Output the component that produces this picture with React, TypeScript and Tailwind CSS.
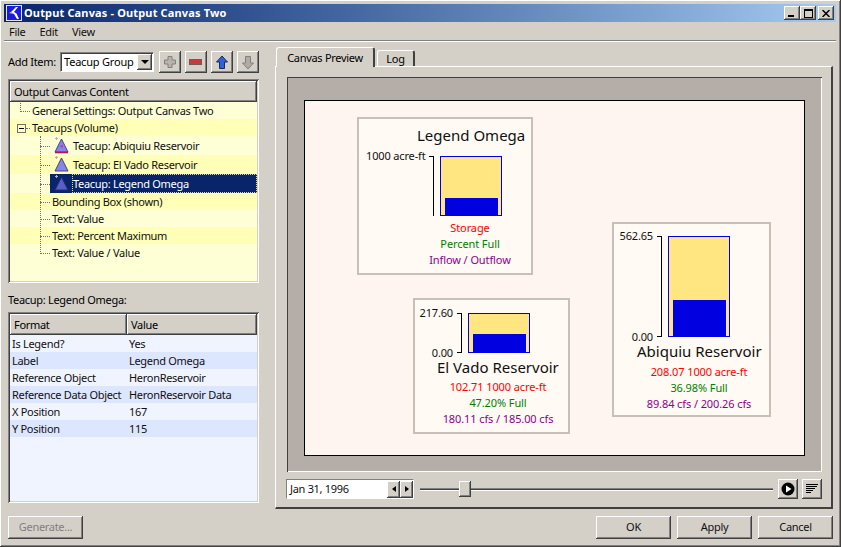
import type { ReactNode } from "react";

const raised = "shadow-[inset_-1px_-1px_0_#404040,inset_1px_1px_0_#ffffff,inset_-2px_-2px_0_#808080]";
const sunken = "shadow-[inset_1px_1px_0_#808080,inset_-1px_-1px_0_#ffffff,inset_2px_2px_0_#404040,inset_-2px_-2px_0_#d4d0c8]";

const Logo = () => (
  <svg width="16" height="16" viewBox="0 0 16 16" className="shrink-0">
    <rect x="0.5" y="0.5" width="15" height="15" fill="#1a1ae0" stroke="#dfe6ff" />
    <path d="M10 2 L5 7 L8 9 L11 14 L13 14 L10.5 8.5 L8 7 L12 2 Z" fill="#ffffff" />
    <path d="M5 7 L3 8 L8 9 Z" fill="#c9d4ff" />
  </svg>
);

const WinButton = ({ children }: { children: ReactNode }) => (
  <div className={`w-[16px] h-[14px] bg-[#d4d0c8] flex items-center justify-center ${raised}`}>{children}</div>
);

const IconButton = ({ children }: { children: ReactNode }) => (
  <button className={`w-[22px] h-[22px] bg-[#d4d0c8] flex items-center justify-center ${raised}`}>{children}</button>
);

const PlusIcon = () => (
  <svg width="14" height="14" viewBox="0 0 14 14">
    <path d="M5 1.5h4v3.5h3.5v4H9v3.5H5V9H1.5V5H5z" fill="#b8b4ac" stroke="#808080" />
  </svg>
);
const MinusIcon = () => (
  <svg width="14" height="14" viewBox="0 0 14 14">
    <rect x="0.5" y="4.5" width="12" height="5" fill="#c8383c" stroke="#6e5a5a" />
  </svg>
);
const UpIcon = () => (
  <svg width="14" height="15" viewBox="0 0 14 15">
    <path d="M7 1 L12.5 7 H9.5 V13.5 H4.5 V7 H1.5 Z" fill="#2f62d8" stroke="#1b2a5c" />
  </svg>
);
const DownIcon = () => (
  <svg width="14" height="15" viewBox="0 0 14 15">
    <path d="M7 14 L12.5 8 H9.5 V1.5 H4.5 V8 H1.5 Z" fill="#b0aca4" stroke="#808080" />
  </svg>
);

const TeacupIcon = ({ alert, selected }: { alert?: boolean; selected?: boolean }) => (
  <svg width="15" height="17" viewBox="0 0 15 17" className="shrink-0">
    <path d="M1 1.5h3M2.5 0v3" stroke="#b0b0c8" strokeWidth="1" />
    <path d="M7.5 2 L14 15 H1 Z" fill={selected ? "#5a5fc8" : "#8585f0"} stroke={selected ? "#1a2a70" : "#46466e"} />
    {alert && <path d="M1 15.5 H14" stroke="#c01050" strokeWidth="1.6" />}
    {alert && <rect x="6.5" y="8" width="2.5" height="2.5" fill="#e030a0" />}
  </svg>
);

const treeRows = [
  { label: "General Settings: Output Canvas Two", pad: 22, h: 17, bg: "bg-[#ffffd6]" },
  { label: "Teacups (Volume)", pad: 22, h: 17, bg: "bg-[#ffffb8]" },
  { label: "Teacup: Abiquiu Reservoir", pad: 40, h: 19, bg: "bg-[#ffffd6]", icon: "alert" },
  { label: "Teacup: El Vado Reservoir", pad: 40, h: 19, bg: "bg-[#ffffb8]", icon: "plain" },
  { label: "Teacup: Legend Omega", pad: 40, h: 19, bg: "bg-[#ffffd6]", icon: "selected" },
  { label: "Bounding Box (shown)", pad: 42, h: 17, bg: "bg-[#ffffb8]" },
  { label: "Text: Value", pad: 42, h: 17, bg: "bg-[#ffffd6]" },
  { label: "Text: Percent Maximum", pad: 42, h: 17, bg: "bg-[#ffffb8]" },
  { label: "Text: Value / Value", pad: 42, h: 17, bg: "bg-[#ffffd6]" },
];

const TreeRow = ({ row }: { row: (typeof treeRows)[number] }) => {
  const isSelected = row.icon === "selected";
  return (
    <div className={`flex items-center ${row.bg}`} style={{ height: row.h, paddingLeft: row.pad }}>
      {row.icon ? (
        <div className={`h-full flex items-center ${isSelected ? "w-[22px] bg-[#0a246a]" : "w-[22px]"}`}>
          <div className="pl-[4px] flex">
            <TeacupIcon alert={row.icon === "alert"} selected={isSelected} />
          </div>
        </div>
      ) : null}
      {isSelected ? (
        <div className="flex-1 h-full flex items-center bg-[#0a246a] text-white border border-dotted border-[#d8d8a0] pt-[1px]">
          {row.label}
        </div>
      ) : (
        <span className={row.icon ? "pl-[1px] pt-[1px]" : "pt-[1px]"}>{row.label}</span>
      )}
    </div>
  );
};

const TreeLines = () => (
  <>
    <div className="absolute left-[10px] top-[1px] h-[9px] border-l border-dotted border-[#707070]" />
    <div className="absolute left-[10px] top-[9px] w-[10px] border-t border-dotted border-[#707070]" />
    <div className="absolute left-[7px] top-[22px] w-[9px] h-[9px] bg-[#ffffb8] border border-[#707070] flex items-center justify-center">
      <div className="w-[5px] h-px bg-black" />
    </div>
    <div className="absolute left-[16px] top-[26px] w-[4px] border-t border-dotted border-[#707070]" />
    <div className="absolute left-[30px] top-[34px] h-[118px] border-l border-dotted border-[#707070]" />
    {[44, 63, 82, 100, 117, 134, 151].map((y) => (
      <div key={y} className="absolute left-[30px] w-[10px] border-t border-dotted border-[#707070]" style={{ top: y }} />
    ))}
  </>
);

const propRows = [
  ["Is Legend?", "Yes"],
  ["Label", "Legend Omega"],
  ["Reference Object", "HeronReservoir"],
  ["Reference Data Object", "HeronReservoir Data"],
  ["X Position", "167"],
  ["Y Position", "115"],
];

const Gauge = ({ top, bottom, h, water, labelW }: { top: string; bottom?: string; h: number; water: number; labelW: number }) => (
  <div className="flex" style={{ height: h }}>
    <div className="flex flex-col justify-between text-right text-[#101010] leading-[12px] -my-[6px] tracking-[-0.15px]" style={{ width: labelW }}>
      <span className="whitespace-nowrap">{top}</span>
      <span>{bottom}</span>
    </div>
    <div className={`ml-[4px] w-[5px] border-t border-r border-black ${bottom ? "border-b" : ""}`} />
    <div className="ml-[6px] w-[62px] border border-[#0000e0] bg-[#ffe680] flex items-end pl-[4px] pr-[3px]">
      <div className="w-full bg-[#0000e0]" style={{ height: water }} />
    </div>
  </div>
);

const CardText = ({ red, green, purple }: { red: string; green: string; purple: string }) => (
  <div className="flex flex-col items-center leading-[16px] whitespace-nowrap tracking-[-0.1px]">
    <span className="text-[#ff0000]">{red}</span>
    <span className="text-[#008000]">{green}</span>
    <span className="text-[#8b008b]">{purple}</span>
  </div>
);

const Card = ({ x, y, w, h, className, children }: { x: number; y: number; w: number; h: number; className: string; children: ReactNode }) => (
  <div
    className={`absolute border-2 border-[#c8c0b8] bg-[#fffaf4] flex flex-col ${className}`}
    style={{ left: x - 305, top: y - 101, width: w, height: h }}
  >
    {children}
  </div>
);

const Canvas = () => (
  <div className="relative flex-1 bg-[#fff5f0] border border-black">
    <Card x={357} y={117} w={176} h={158} className="pl-[7px]">
      <div className="mt-[5px] pl-[51px] text-[15px] leading-[22px] text-[#101010] whitespace-nowrap tracking-normal">Legend Omega</div>
      <div className="mt-[10px]">
        <Gauge top="1000 acre-ft" h={60} water={17} labelW={59} />
      </div>
      <div className="mt-[4px] ml-[34px] w-[140px]">
        <CardText red="Storage" green="Percent Full" purple="Inflow / Outflow" />
      </div>
    </Card>
    <Card x={413} y={298} w={157} h={136} className="pl-[4px]">
      <div className="mt-[13px]">
        <Gauge top="217.60" bottom="0.00" h={40} water={18} labelW={34} />
      </div>
      <div className="mt-[6px] pl-[18px] text-[15px] leading-[16px] text-[#101010] whitespace-nowrap tracking-normal">El Vado Reservoir</div>
      <div className="mt-[4px] ml-[10px] w-[138px]">
        <CardText red="102.71 1000 acre-ft" green="47.20% Full" purple="180.11 cfs / 185.00 cfs" />
      </div>
    </Card>
    <Card x={612} y={222} w={159} h={195} className="pl-[3px]">
      <div className="mt-[12px]">
        <Gauge top="562.65" bottom="0.00" h={101} water={36} labelW={36} />
      </div>
      <div className="mt-[6px] pl-[20px] text-[15px] leading-[16px] text-[#101010] whitespace-nowrap tracking-normal">Abiquiu Reservoir</div>
      <div className="mt-[5px] ml-[12px] w-[140px]">
        <CardText red="208.07 1000 acre-ft" green="36.98% Full" purple="89.84 cfs / 200.26 cfs" />
      </div>
    </Card>
  </div>
);

const App = () => {
  return (
    <div
      className="w-[841px] h-[547px] overflow-hidden bg-[#d4d0c8] flex flex-col pl-[4px] pr-[5px] pt-[4px] pb-[2px] text-[11px] tracking-[-0.3px] text-black shadow-[inset_-1px_-1px_0_#404040,inset_1px_1px_0_#ffffff,inset_-2px_-2px_0_#808080]"
      style={{ fontFamily: '"Noto Sans", sans-serif' }}
    >
      {/* Title bar */}
      <div className="h-[18px] shrink-0 flex items-center bg-gradient-to-r from-[#0a246a] to-[#a6caf0] pl-[2px] pr-[2px]">
        <Logo />
        <span className="ml-[2px] text-white font-bold text-[11px] tracking-[0.15px] whitespace-nowrap">Output Canvas - Output Canvas Two</span>
        <div className="ml-auto flex">
          <WinButton><div className="w-[6px] h-[2px] bg-black mt-[6px] mr-[2px]" /></WinButton>
          <WinButton><div className="w-[9px] h-[9px] border border-black border-t-2" /></WinButton>
          <div className="ml-[2px]">
            <WinButton>
              <svg width="8" height="7" viewBox="0 0 8 7"><path d="M0.5 0 L7.5 7 M7.5 0 L0.5 7" stroke="#000" strokeWidth="1.5" /></svg>
            </WinButton>
          </div>
        </div>
      </div>

      {/* Menu */}
      <div className="h-[19px] shrink-0 flex items-center gap-[14px] pl-[5px] pt-[2px] border-b border-[#808080] text-[#101010]">
        <span>File</span>
        <span>Edit</span>
        <span>View</span>
      </div>

      <div className="flex-1 flex border-t border-white">
        {/* Left column */}
        <div className="w-[251px] ml-[4px] pt-[9px] flex flex-col shrink-0">
          <div className="flex items-center h-[22px]">
            <span className="w-[52px]">Add Item:</span>
            <div className="w-[94px] h-[20px] bg-white border border-[#808080] border-r-white border-b-white flex items-center pl-[2px] pr-[1px] shadow-[inset_1px_1px_0_#404040]">
              <span className="flex-1 pl-[1px] tracking-[-0.2px]">Teacup Group</span>
              <div className={`w-[15px] h-[16px] bg-[#d4d0c8] flex items-center justify-center ${raised}`}>
                <div className="w-0 h-0 border-l-[4px] border-r-[4px] border-t-[4px] border-l-transparent border-r-transparent border-t-black" />
              </div>
            </div>
            <div className="ml-[5px] flex gap-[4px]">
              <IconButton><PlusIcon /></IconButton>
              <IconButton><MinusIcon /></IconButton>
              <IconButton><UpIcon /></IconButton>
              <IconButton><DownIcon /></IconButton>
            </div>
          </div>

          {/* Tree */}
          <div className={`mt-[6px] h-[204px] p-[2px] pr-[2px] flex flex-col bg-[#ffffd6] ${sunken}`}>
            <div className={`h-[21px] shrink-0 flex items-center pl-[4px] pt-[1px] bg-[#d4d0c8] ${raised}`}>Output Canvas Content</div>
            <div className="relative flex-1 text-[#101010] overflow-hidden">
              {treeRows.map((r) => <TreeRow key={r.label} row={r} />)}
              <TreeLines />
            </div>
          </div>

          <div className="mt-[10px] h-[14px] leading-[14px]">Teacup: Legend Omega:</div>

          {/* Property table */}
          <div className={`mt-[5px] h-[191px] p-[2px] flex flex-col bg-[#f0f4ff] ${sunken}`}>
            <div className="flex h-[21px] shrink-0">
              <div className={`w-[117px] flex items-center pl-[4px] pt-[1px] bg-[#d4d0c8] ${raised}`}>Format</div>
              <div className={`flex-1 flex items-center pl-[4px] pt-[1px] bg-[#d4d0c8] ${raised}`}>Value</div>
            </div>
            {propRows.map(([k, v], i) => (
              <div key={k} className={`flex items-center h-[17px] pt-[1px] text-[#101010] ${i % 2 === 1 ? "bg-[#dce6ff]" : ""}`}>
                <span className="w-[117px] pl-[2px] whitespace-nowrap">{k}</span>
                <span className="pl-[2px] whitespace-nowrap">{v}</span>
              </div>
            ))}
          </div>

          <button className={`mt-[13px] w-[75px] h-[23px] bg-[#d4d0c8] text-[#808080] ${raised}`}>Generate...</button>
        </div>

        {/* Right column */}
        <div className="w-[558px] ml-[16px] pt-[5px] flex flex-col shrink-0">
          <div className="flex h-[19px] items-end shrink-0 relative z-10 pl-[1px]">
            <div className="h-[20px] w-[99px] bg-[#d4d0c8] border-t border-l border-white border-r-2 border-r-[#404040] rounded-t-[3px] flex items-center justify-center pt-[1px] -mb-px">Canvas Preview</div>
            <div className="ml-[2px] h-[16px] w-[38px] bg-[#d4d0c8] border-t border-l border-white border-r-2 border-r-[#404040] rounded-t-[3px] flex items-center justify-center pt-[1px]">Log</div>
          </div>
          <div className="h-[443px] border-t border-l border-white border-r-2 border-b-2 border-r-[#404040] border-b-[#404040] pl-[11px] pt-[10px] pr-[9px] flex flex-col">
            <div className="h-[395px] bg-[#b5aea8] flex pl-[17px] pr-[17px] pt-[23px] pb-[16px] shadow-[inset_1px_1px_0_#404040,inset_-1px_-1px_0_#ffffff]">
              <Canvas />
            </div>
            {/* Timeline */}
            <div className="mt-[7px] flex items-center">
              <div className="w-[128px] h-[20px] ml-[-1px] bg-white border border-[#808080] border-r-white border-b-white flex items-center pl-[3px] text-[#101010]">
                <span className="flex-1">Jan 31, 1996</span>
                <div className={`w-[13px] h-[17px] bg-[#d4d0c8] flex items-center justify-center ${raised}`}>
                  <div className="w-0 h-0 border-y-[3px] border-r-[4px] border-y-transparent border-r-black" />
                </div>
                <div className={`w-[13px] h-[17px] bg-[#d4d0c8] flex items-center justify-center ${raised}`}>
                  <div className="w-0 h-0 border-y-[3px] border-l-[4px] border-y-transparent border-l-black" />
                </div>
              </div>
              <div className="relative ml-[6px] w-[353px] h-[16px] flex items-center">
                <div className="w-full h-[3px] border-t border-[#808080] border-b border-b-white bg-[#404040]" />
                <div className={`absolute left-[39px] top-0 w-[12px] h-[16px] bg-[#d4d0c8] ${raised}`} />
              </div>
              <button className={`ml-[5px] w-[20px] h-[20px] flex items-center justify-center bg-[#d4d0c8] ${raised}`}>
                <svg width="14" height="14" viewBox="0 0 14 14">
                  <circle cx="7" cy="7" r="6.5" fill="#000" />
                  <path d="M5 3.5 L10.5 7 L5 10.5 Z" fill="#fff" />
                </svg>
              </button>
              <button className={`ml-[4px] w-[20px] h-[20px] flex items-center justify-center bg-[#d4d0c8] ${raised}`}>
                <svg width="12" height="11" viewBox="0 0 12 11">
                  <path d="M0 0.5H12M0 2.5H11M0 4.5H9M0 6.5H7M0 8.5H5" stroke="#000" strokeWidth="1" />
                </svg>
              </button>
            </div>
          </div>
          {/* Dialog buttons */}
          <div className="mt-[7px] flex justify-end gap-[6px] text-[#101010]">
            <button className={`w-[75px] h-[23px] bg-[#d4d0c8] ${raised}`}>OK</button>
            <button className={`w-[75px] h-[23px] bg-[#d4d0c8] ${raised}`}>Apply</button>
            <button className={`w-[75px] h-[23px] bg-[#d4d0c8] ${raised}`}>Cancel</button>
          </div>
        </div>
      </div>
    </div>
  );
};

export default App;
